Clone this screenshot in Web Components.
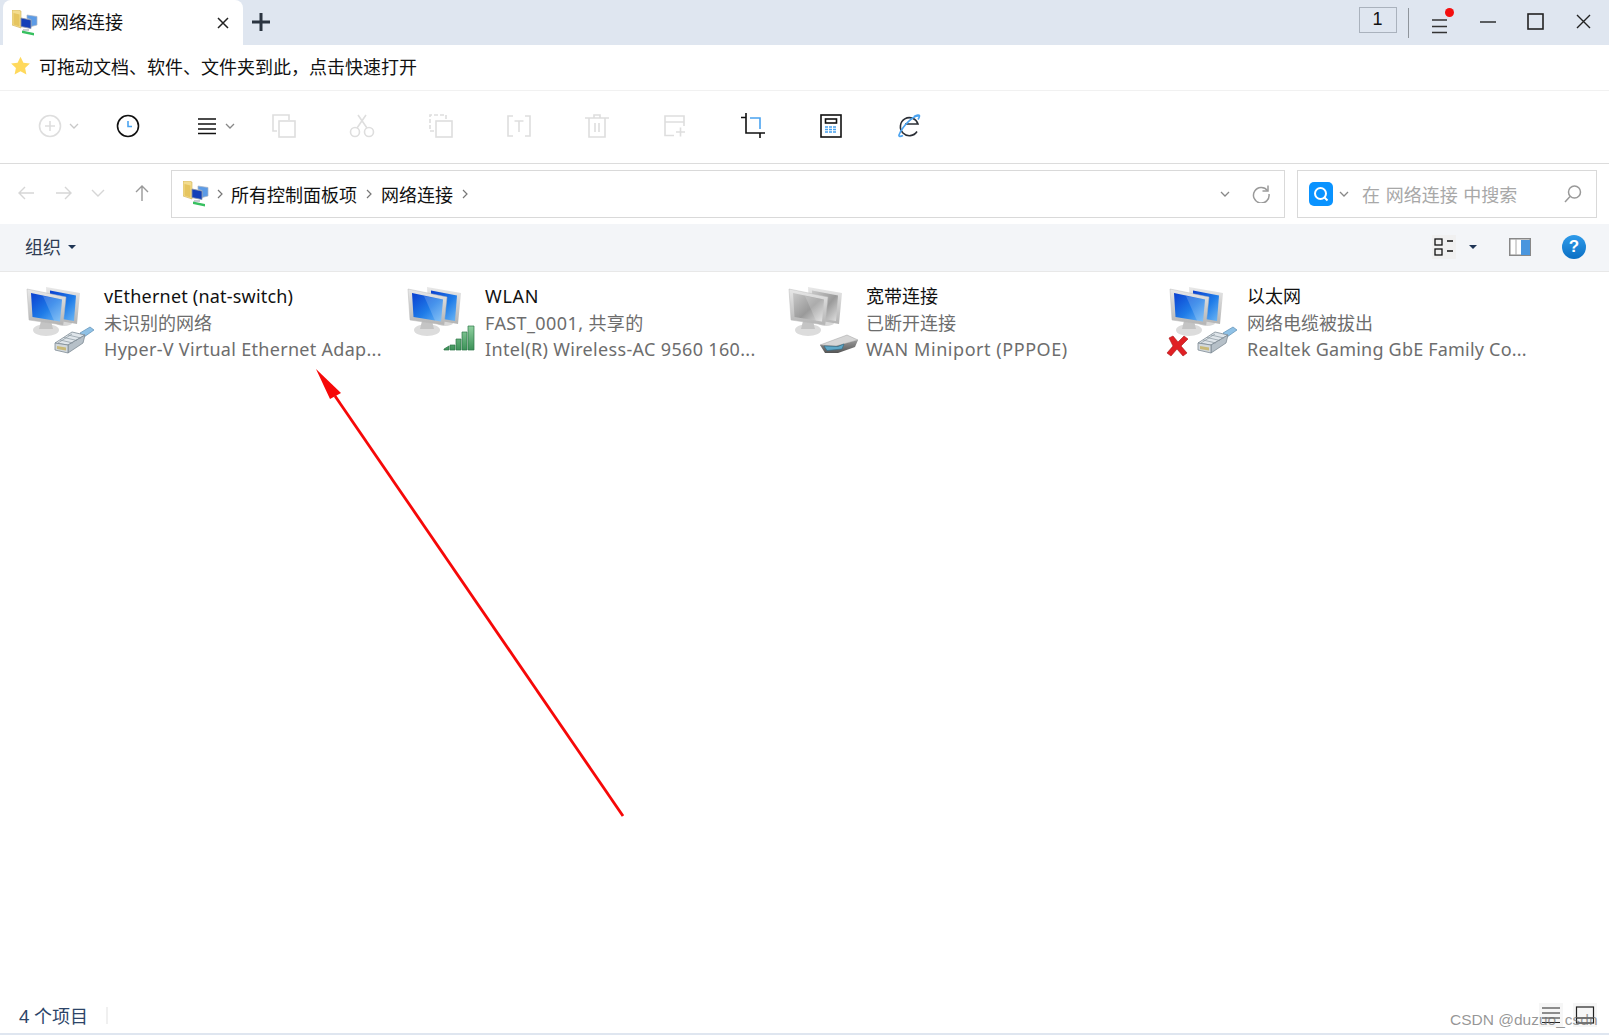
<!DOCTYPE html>
<html lang="zh">
<head>
<meta charset="utf-8">
<title>网络连接</title>
<style>
  html, body { margin: 0; height: 100%; background: #fff; }
  body {
    font-family: "Noto Sans", "Noto Sans CJK SC", sans-serif;
    font-size: 18px;
    color: #111;
    overflow: hidden;
  }
  explorer-window { height: 1035px; }
</style>
</head>
<body>

<template id="folder-glyph">
  <svg style="filter:blur(.3px)" width="26" height="26" viewBox="0 0 26 26">
    <path d="M0 0h6l3 1v17l-9-3z" fill="#f3dc8e" stroke="#d2b256" stroke-width=".6"/>
    <path d="M1.500 3l6 1.500v12l-6-2z" fill="#e6c55f"/>
    <path d="M15 5l10 1.500v8.500l-6 1.500v-7l-4-1z" fill="#5c9be6" stroke="#a9b4c4" stroke-width=".7"/>
    <path d="M9 8l10 2v8.500l-10-2z" fill="#123fb8" stroke="#8a96a8" stroke-width=".8"/>
    <path d="M11 19h6v2h-6z" fill="#c8ccd2"/>
    <path d="M10 20.500l12 2.500v2.500l-12-2.500z" fill="#37c060"/>
  </svg>
</template>

<template id="explorer-window-t">
  <style>
    :host { display: flex; flex-direction: column; position: relative; }
    .main { flex: 1; min-height: 0; }
    svg.arrow { position: absolute; left: 300px; top: 360px; pointer-events: none; }
    .mark {
      position: absolute; left: 1450px; top: 1011px;
      font: 15.5px "Liberation Sans", sans-serif; color: rgba(110,110,110,.72); white-space: nowrap;
    }
  </style>
  <title-bar></title-bar>
  <fav-bar></fav-bar>
  <tool-bar></tool-bar>
  <addr-bar></addr-bar>
  <cmd-bar></cmd-bar>
  <net-list class="main">
    <net-item kind="plug" name="vEthernet (nat-switch)" status="未识别的网络" device="Hyper-V Virtual Ethernet Adap..." spacing="0.2 0 0.3"></net-item>
    <net-item kind="wifi" name="WLAN" status="FAST_0001, 共享的" device="Intel(R) Wireless-AC 9560 160..." spacing="0.7 0.4 0.33"></net-item>
    <net-item kind="modem" name="宽带连接" status="已断开连接" device="WAN Miniport (PPPOE)" spacing="0 0 0.55"></net-item>
    <net-item kind="unplugged" name="以太网" status="网络电缆被拔出" device="Realtek Gaming GbE Family Co..." spacing="0 0 0.2"></net-item>
  </net-list>
  <status-bar></status-bar>
  <svg class="arrow" width="340" height="470" viewBox="0 0 340 470">
    <line x1="323" y1="456" x2="35" y2="36" stroke="#f60808" stroke-width="2.800"/>
    <path d="M16 9L41 33L30 39z" fill="#f60808"/>
  </svg>
  <span class="mark">CSDN @duzuo_csdn</span>
</template>

<template id="title-bar-t">
  <style>
    :host { display: flex; height: 45px; background: #dfe6f0; align-items: center; flex: none; }
    .tab {
      width: 240px; height: 45px; margin-left: 3px; background: #fff; border-radius: 8px 8px 0 0;
      display: flex; align-items: center; box-sizing: border-box; padding-left: 9px; flex: none;
    }
    .tab .name { margin-left: 13px; flex: 1; line-height: 45px; }
    .tab svg.x { margin-right: 14px; }
    .plus { margin: 0 0 2px 9px; }
    .grow { flex: 1; }
    .count {
      width: 36px; height: 24px; border: 1px solid #aab2bd; display: flex; align-items: center;
      justify-content: center; font: 18px "Liberation Sans", sans-serif; color: #111; margin: 0 11px 6px 0; box-sizing: content-box;
    }
    .sep { width: 1px; height: 30px; background: #8f959c; margin-right: 22px; }
    .menu { position: relative; width: 17px; height: 16px; margin-right: 17px; }
    .menu i { position: absolute; right: -6px; top: -7px; width: 9px; height: 9px; background: #f40f0f; border-radius: 50%; }
    .ctl { display: flex; margin: 0 2px 2px 0; }
    .ctl span { width: 47.500px; height: 43px; display: flex; align-items: center; justify-content: center; }
  </style>
  <div class="tab">
    <folder-icon></folder-icon>
    <span class="name">网络连接</span>
    <svg class="x" width="12" height="12" viewBox="0 0 12 12"><path d="M1 1l10 10M11 1L1 11" stroke="#222" stroke-width="1.5"/></svg>
  </div>
  <svg class="plus" width="18" height="18" viewBox="0 0 18 18"><path d="M9 0v18M0 9h18" stroke="#2b3440" stroke-width="3"/></svg>
  <div class="grow"></div>
  <div class="count">1</div>
  <div class="sep"></div>
  <div class="menu">
    <svg width="17" height="16" viewBox="0 0 17 16"><path d="M1 2h15M1 8.500h15M1 14.500h15" stroke="#333" stroke-width="1.3"/></svg>
    <i></i>
  </div>
  <div class="ctl">
    <span><svg width="16" height="4" viewBox="0 0 16 4"><path d="M0 2h16" stroke="#222" stroke-width="1.400"/></svg></span>
    <span><svg width="17" height="17" viewBox="0 0 17 17"><rect x="1" y="1" width="15" height="15" fill="none" stroke="#222" stroke-width="1.600"/></svg></span>
    <span><svg width="15" height="15" viewBox="0 0 15 15"><path d="M1 1l13 13M14 1L1 14" stroke="#222" stroke-width="1.400"/></svg></span>
  </div>
</template>

<template id="fav-bar-t">
  <style>
    :host { display: flex; align-items: center; height: 46px; box-sizing: border-box; padding: 0 0 3px 10px; border-bottom: 1px solid #f1f1f1; flex: none; }
    span { margin-left: 8px; }
  </style>
  <svg width="21" height="20" viewBox="0 0 20 20"><path d="M10 .8l2.900 6 6.500.8-4.800 4.400 1.300 6.500L10 15.300l-5.900 3.200 1.300-6.500L.6 7.600l6.500-.8z" fill="#ffd95c"/></svg>
  <span>可拖动文档、软件、文件夹到此，点击快速打开</span>
</template>

<template id="tool-btn-t">
  <style>
    :host { display: flex; width: 78.100px; height: 72px; box-sizing: border-box; padding-bottom: 3px; align-items: center; justify-content: center; position: relative; flex: none; }
    ::slotted(svg.chev) { position: absolute; top: 32px; }
  </style>
  <slot></slot>
</template>

<template id="tool-bar-t">
  <style>
    :host { display: flex; height: 72px; padding-left: 11px; border-bottom: 1px solid #dcdcdc; flex: none; }
    svg { fill: none; stroke: #dedede; stroke-width: 1.6; }
    svg.on { stroke: #111; }
    .blue { stroke: #4aa3f0; }
    .chev { stroke-width: 1.3; stroke: #c8c8c8; }
    .chev.on { stroke: #888; }
  </style>
  <tool-btn><svg width="24" height="24" viewBox="0 0 24 24"><circle cx="12" cy="12" r="10.500"/><path d="M12 7v10M7 12h10"/></svg><svg class="chev" style="left:58px" width="10" height="7" viewBox="0 0 10 7"><path d="M1 1l4 4 4-4"/></svg></tool-btn>
  <tool-btn><svg class="on" width="24" height="24" viewBox="0 0 24 24"><circle cx="12" cy="12" r="10.500"/><path class="blue" d="M12 7v5.500h4"/></svg></tool-btn>
  <tool-btn><svg class="on" style="margin-left:2px" width="20" height="18" viewBox="0 0 20 18"><path d="M1 2h18M1 7h18M1 12h18M1 16.500h18"/></svg><svg class="chev on" style="left:58px" width="10" height="7" viewBox="0 0 10 7"><path d="M1 1l4 4 4-4"/></svg></tool-btn>
  <tool-btn><svg width="24" height="24" viewBox="0 0 24 24"><path d="M5 17H1V1h16v5"/><rect x="7" y="7" width="16" height="16"/></svg></tool-btn>
  <tool-btn><svg width="26" height="24" viewBox="0 0 26 24"><circle cx="6" cy="18" r="4.500"/><circle cx="20" cy="18" r="4.500"/><path d="M8 14L17 1M18 14L9 1"/></svg></tool-btn>
  <tool-btn><svg width="24" height="24" viewBox="0 0 24 24"><path d="M5 17H1V1h16v5" stroke-dasharray="4 2"/><rect x="7" y="7" width="16" height="16"/></svg></tool-btn>
  <tool-btn><svg width="24" height="24" viewBox="0 0 24 24"><path d="M6 2H1v20h5M18 2h5v20h-5M7.500 7h9M12 7v11"/></svg></tool-btn>
  <tool-btn><svg width="24" height="24" viewBox="0 0 24 24"><path d="M0 4h24M9 4V1h6v3M4 4v19h16V4M10 9v9M14 9v9"/></svg></tool-btn>
  <tool-btn><svg width="22" height="22" viewBox="0 0 22 22"><path d="M10 20.500H1V1h19v10M1 7h19M12 17h9M16.500 12.500v9"/></svg></tool-btn>
  <tool-btn><svg class="on" width="26" height="26" viewBox="0 0 26 26"><path d="M6 0v20h19M20 25v-5M1 4.500h5"/><path class="blue" d="M10 5h10v11"/></svg></tool-btn>
  <tool-btn><svg class="on" width="22" height="24" viewBox="0 0 22 24"><rect x="1" y="1" width="20" height="22"/><rect x="5.500" y="5" width="11" height="4"/><path class="blue" stroke-dasharray="3 1" d="M5 13h12M5 15.500h12M5 18h12"/></svg></tool-btn>
  <tool-btn><svg class="on" width="24" height="24" viewBox="0 0 24 24"><path stroke="#2b2f36" d="M20 17.500a9 9 0 1 1 1-7.500H8"/><path class="blue" d="M22 2C17 1 6 11 2 21c-.5 1.500 1 2 4 .5M17 2.500c3-1.500 5.500-2 5.500-.5 0 1-.5 2-1.500 3.500"/></svg></tool-btn>
</template>

<template id="addr-bar-t">
  <style>
    :host { display: flex; height: 60px; align-items: center; flex: none; }
    svg { fill: none; }
    .nav { display: flex; width: 171px; flex: none; height: 100%; align-items: center; position: relative; }
    .nav svg { position: absolute; top: 21px; stroke: #d6d6d6; stroke-width: 1.4; }
    .box {
      height: 48px; box-sizing: border-box; border: 1px solid #d9d9d9; display: flex; align-items: center;
    }
    .path { width: 1114px; flex: none; padding-left: 11px; }
    .path .sp { margin: 0 8px; display: flex; }
    .path .sp.first { margin: 0 7px 0 7px; }
    .path .end { margin-left: auto; display: flex; align-items: center; }
    .search { width: 300px; flex: none; margin-left: 12px; padding-left: 11px; color: #a8a8a8; }
    .search .q { width: 24px; height: 24px; border-radius: 5px; background: #0a93ff; display: flex; align-items: center; justify-content: center; }
    .search .ph { margin-left: 13px; white-space: pre; flex: 1; word-spacing: 1px; }
    .search .m { margin-right: 14px; }
  </style>
  <div class="nav">
    <svg style="left:17px" width="18" height="16" viewBox="0 0 18 16"><path d="M17 8H2M8 2L2 8l6 6"/></svg>
    <svg style="left:55px" width="18" height="16" viewBox="0 0 18 16"><path d="M1 8h15M10 2l6 6-6 6"/></svg>
    <svg style="left:91px" width="14" height="16" viewBox="0 0 14 16"><path d="M1 5l6 6 6-6"/></svg>
    <svg style="left:135px;stroke:#999;top:20px" width="14" height="18" viewBox="0 0 14 18"><path d="M7 17V2M1 8l6-6 6 6"/></svg>
  </div>
  <div class="box path">
    <folder-icon></folder-icon>
    <span class="sp first"><svg width="8" height="10" viewBox="0 0 8 10" stroke="#777" stroke-width="1.2"><path d="M2 1l4 4-4 4"/></svg></span>
    <span>所有控制面板项</span>
    <span class="sp"><svg width="8" height="10" viewBox="0 0 8 10" stroke="#777" stroke-width="1.2"><path d="M2 1l4 4-4 4"/></svg></span>
    <span>网络连接</span>
    <span class="sp"><svg width="8" height="10" viewBox="0 0 8 10" stroke="#777" stroke-width="1.2"><path d="M2 1l4 4-4 4"/></svg></span>
    <span class="end">
      <svg width="10" height="7" viewBox="0 0 10 7" stroke="#888" stroke-width="1.3"><path d="M1 1l4 4 4-4"/></svg>
      <svg style="margin:0 14px 0 22px" width="18" height="18" viewBox="0 0 18 18" stroke="#9a9a9a" stroke-width="1.5"><path d="M15.500 5.500A7.800 7.800 0 1 0 17 9"/><path d="M16 .5v5.500h-5.500"/></svg>
    </span>
  </div>
  <div class="box search">
    <span class="q"><svg width="16" height="16" viewBox="0 0 16 16" stroke="#fff" stroke-width="2"><circle cx="7.500" cy="7.500" r="5.500"/><path d="M11.500 11.500l3 3"/></svg></span>
    <svg style="margin-left:6px" width="10" height="7" viewBox="0 0 10 7" stroke="#888" stroke-width="1.3"><path d="M1 1l4 4 4-4"/></svg>
    <span class="ph">在 网络连接 中搜索</span>
    <svg class="m" width="18" height="18" viewBox="0 0 18 18" stroke="#999" stroke-width="1.5"><circle cx="10.500" cy="7" r="6"/><path d="M6 11.500L1 17"/></svg>
  </div>
</template>

<template id="cmd-bar-t">
  <style>
    :host { display: flex; height: 47px; box-sizing: content-box; padding-bottom: 0; background: #f3f5f8; border-bottom: 1px solid #e8e8e8; align-items: flex-start; flex: none; padding-left: 25px; color: #2f3c52; }
    :host > * { margin-top: 11px; }
    .name { line-height: 24px; }
    .caret { width: 0; height: 0; border: 4px solid transparent; border-top: 4.500px solid #1f3555; border-bottom: 0; margin: 21px 0 0 7px; }
    .grow { flex: 1; }
    .view { width: 24px; height: 24px; background: #f0f0f0; display: flex; align-items: center; justify-content: center; }
    .pane { margin-top: 14px; }
    .help { width: 24px; height: 24px; border-radius: 50%; background: linear-gradient(#2f9bea,#0a6fc4); color: #fff; font: bold 17px/24px "Liberation Sans", sans-serif; text-align: center; margin: 11px 23px 0 31px; }
  </style>
  <span class="name">组织</span><span class="caret"></span>
  <span class="grow"></span>
  <span class="view"><svg width="20" height="20" viewBox="0 0 20 20" fill="none" stroke="#111" stroke-width="1.3"><rect x="1" y="2" width="7" height="6"/><rect x="1" y="12" width="7" height="6"/><path d="M13 4h6M13 14h6"/></svg></span>
  <span class="caret" style="margin-left:13px;margin-right:32px"></span>
  <svg class="pane" width="22" height="18" viewBox="0 0 22 18"><rect x=".75" y=".75" width="20.500" height="16.500" fill="#fff" stroke="#888" stroke-width="1.5"/><path d="M7 1v16" stroke="#aaa"/><rect x="12" y="2" width="9" height="15" fill="#4a96de"/></svg>
  <span class="help">?</span>
</template>

<template id="net-list-t">
  <style>
    :host { display: grid; grid-template-columns: repeat(4, 381px); align-content: start; padding: 11px 0 0 22px; }
  </style>
  <slot></slot>
</template>

<template id="net-item-t">
  <style>
    :host { display: flex; min-width: 0; }
    .txt { line-height: 26px; white-space: nowrap; margin-left: 6px; }
    .a { color: #111; }
    .b { color: #6d6d6d; margin-top: 1px; }
    .c { color: #6d6d6d; }
  </style>
  <net-icon></net-icon>
  <div class="txt"><div class="a"></div><div class="b"></div><div class="c"></div></div>
</template>

<template id="net-icon-t">
  <style>
    :host { display: block; width: 76px; height: 76px; flex: none; }
    svg { display: block; filter: blur(.35px); }
  </style>
  <svg width="76" height="76" viewBox="0 0 76 76">
    <defs>
      <linearGradient id="scr" x1="0" y1="0" x2="1" y2="1"><stop class="s1" offset="0"/><stop class="s2" offset=".55"/><stop class="s3" offset="1"/></linearGradient>
      <linearGradient id="bez" x1="0" y1="0" x2="0" y2="1"><stop offset="0" stop-color="#e8e8e8"/><stop offset="1" stop-color="#b4b4b4"/></linearGradient>
      <linearGradient id="bar" x1="0" y1="0" x2="0" y2="1"><stop offset="0" stop-color="#8fd09f"/><stop offset="1" stop-color="#3c9258"/></linearGradient>
      <linearGradient id="mod" x1="0" y1="0" x2="0" y2="1"><stop offset="0" stop-color="#9a9a9a"/><stop offset="1" stop-color="#555"/></linearGradient>
    </defs>
    <ellipse cx="42" cy="40" rx="8" ry="3" fill="#d8d8d8"/>
    <path d="M24 4l34 6-3 31-29-5z" fill="url(#bez)"/>
    <path d="M28 7.500l26 5-2 25.500L28 34z" fill="url(#scr)"/>
    <ellipse cx="24" cy="47" rx="13" ry="6" fill="#dcdcdc"/>
    <path d="M19 38h10l2 8H17z" fill="#c4c4c4"/>
    <path d="M5 6l39 8-3 28L7 37z" fill="url(#bez)" stroke="#bbb" stroke-width=".5"/>
    <path d="M9 10l31 6.500-2 22L10.500 34z" fill="url(#scr)"/>
    <path d="M21 13l19 3.500-2 22-6-.8z" fill="#fff" opacity=".18"/>
    <g class="plug">
      <path d="M58 50l10-6 4 3-10 7z" fill="#8fc1e6" stroke="#5f8fb5" stroke-width=".7"/>
      <path d="M33 60l17-11 13 3-17 10z" fill="#dfe5ea" stroke="#7d8a94" stroke-width=".8"/>
      <path d="M46 62l17-10-2 8-15 10z" fill="#b6c0c8" stroke="#7d8a94" stroke-width=".8"/>
      <path d="M33 60l13 2v8l-13-3z" fill="#d2d8dc" stroke="#7d8a94" stroke-width=".8"/>
      <path d="M35 63l9 1.500v3l-9-1.500z" fill="#c9b978"/>
      <path d="M38 57l13 3M42 54.500l13 3M46 52l13 3M50 51l-14 9" fill="none" stroke="#8a969f" stroke-width=".7"/>
    </g>
    <g class="wifi">
      <path d="M41 66l5-3v4h-5zM47 62h5v5h-5zM53 56h5v11h-5zM59 49h5v18h-5zM65 43h6v24h-6z" fill="url(#bar)" stroke="#2e7547" stroke-width=".7"/>
    </g>
    <g class="modem">
      <path d="M36 62l27-10 11 5-22 6z" fill="#d6d6d6" stroke="#a0a0a0" stroke-width=".5"/>
      <path d="M36 62l16 1 22-6-3 7-17 6H41z" fill="url(#mod)"/>
      <path d="M40 63l14 .5 6-2.500-2 5-15 1.500z" fill="#5fa8c8" stroke="#2b6a86" stroke-width=".6"/>
    </g>
    <g class="cross">
      <path d="M4 55l4-2 5 6 6-6 4 3-7 7 6 7-4 3-6-7-6 7-4-3 6-7z" fill="#e02024" stroke="#a81418" stroke-width=".6"/>
    </g>
  </svg>
</template>

<template id="status-bar-t">
  <style>
    :host { display: flex; height: 46px; box-sizing: border-box; align-items: center; padding: 8px 0 0 19px; color: #2c4468; border-bottom: 2px solid #dfe6f0; flex: none; }
    .sep { width: 2px; height: 17px; background: #f0f0f0; margin-left: 18px; }
    .grow { flex: 1; }
    .b { width: 24px; height: 24px; background: #f6f6f6; display: flex; align-items: center; justify-content: center; }
  </style>
  <span style="white-space:pre">4 个项目</span><span class="sep"></span><span class="grow"></span>
  <span class="b"><svg width="20" height="18" viewBox="0 0 20 18" stroke="#222" stroke-width="1.2"><path d="M1 2h18M1 7h18M1 12h18M1 16.500h18"/></svg></span>
  <span class="b" style="margin:0 12px 0 10px"><svg width="20" height="18" viewBox="0 0 20 18" fill="none" stroke="#222" stroke-width="1.2"><rect x="1.500" y="1" width="17" height="16"/><path d="M1 12h18"/></svg></span>
</template>

<explorer-window></explorer-window>

<script>
  (function(customElements) {
    'use strict';

    class Base extends HTMLElement {
      constructor() {
        super();
        const template = document.querySelector('#' + this.localName + '-t').content;
        this.attachShadow({mode: 'open'}).appendChild(document.importNode(template, true));
      }
    }

    class FolderIcon extends HTMLElement {
      constructor() {
        super();
        this.attachShadow({mode: 'open'}).innerHTML = '<style>:host{display:inline-flex;flex:none}</style>';
        this.shadowRoot.appendChild(document.importNode(document.querySelector('#folder-glyph').content, true));
      }
    }

    class NetIcon extends Base {
      setKind(kind) {
        const root = this.shadowRoot;
        const colours = kind === 'modem' ? ['#c9c9c9', '#9a9a9a', '#e2e2e2'] : ['#0a3fd0', '#1f7ce8', '#6fb8f5'];
        ['.s1', '.s2', '.s3'].forEach((s, i) => root.querySelector(s).setAttribute('stop-color', colours[i]));
        const shown = {
          plug: ['plug'],
          wifi: ['wifi'],
          modem: ['modem'],
          unplugged: ['plug', 'cross']
        }[kind];
        ['plug', 'wifi', 'modem', 'cross'].forEach(n => {
          root.querySelector('g.' + n).style.display = shown.includes(n) ? 'inline' : 'none';
        });
      }
    }

    class NetItem extends Base {
      connectedCallback() {
        const root = this.shadowRoot;
        const spacing = this.getAttribute('spacing').split(' ');
        [['.a', 'name'], ['.b', 'status'], ['.c', 'device']].forEach(([sel, attr], i) => {
          const line = root.querySelector(sel);
          line.textContent = this.getAttribute(attr);
          line.style.letterSpacing = spacing[i] + 'px';
        });
        root.querySelector('net-icon').setKind(this.getAttribute('kind'));
      }
    }

    customElements.define('folder-icon', FolderIcon);
    customElements.define('net-icon', NetIcon);
    customElements.define('net-item', NetItem);
    ['title-bar', 'fav-bar', 'tool-btn', 'tool-bar', 'addr-bar', 'cmd-bar', 'net-list', 'status-bar', 'explorer-window'].forEach(name => {
      customElements.define(name, class extends Base {});
    });
  })(window.customElements);
</script>
</body>
</html>
